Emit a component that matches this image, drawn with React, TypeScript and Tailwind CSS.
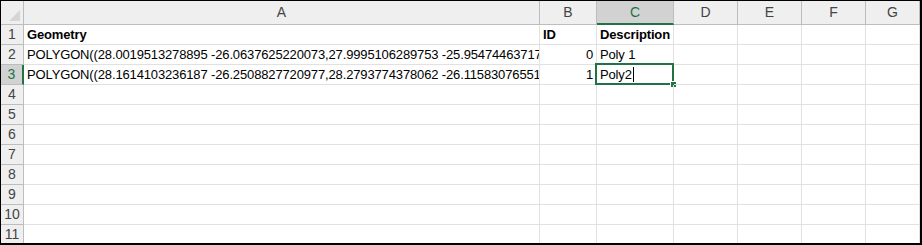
import React from "react";

const cols = ["A", "B", "C", "D", "E", "F", "G"];

type Cell = { text?: string; bold?: boolean; right?: boolean };

const rows: Cell[][] = [
  [{ text: "Geometry", bold: true }, { text: "ID", bold: true }, { text: "Description", bold: true }],
  [
    { text: "POLYGON((28.0019513278895 -26.0637625220073,27.9995106289753 -25.9547446371712,28.0921044783211 -25.9412387415526))" },
    { text: "0", right: true },
    { text: "Poly 1" },
  ],
  [
    { text: "POLYGON((28.1614103236187 -26.2508827720977,28.2793774378062 -26.1158307655131,28.3301948372015 -26.2011744308192))" },
    { text: "1", right: true },
    { text: "Poly2" },
  ],
];

const SelectedCol = 2;
const SelectedRow = 3;

const App = () => {
  return (
    <div className="w-[922px] h-[245px] overflow-hidden border-t border-l border-r-2 border-b-2 border-black bg-white font-['Liberation_Sans',Arial,sans-serif] text-[13px] tracking-[-0.14px] text-black">
      <div className="grid grid-cols-[23px_516px_57px_77px_64px_64px_64px_1fr] grid-rows-[24px_repeat(11,20px)]">
        {/* corner */}
        <div className="relative bg-[#efefef] border-r border-b border-[#bdbdbd]">
          <svg className="absolute right-[3px] bottom-[3px]" width="11" height="11" viewBox="0 0 11 11">
            <polygon points="11,0 11,11 0,11" fill="#d5d5d5" />
          </svg>
        </div>
        {cols.map((c, i) =>
          i === SelectedCol ? (
            <div
              key={c}
              className="flex items-center justify-center bg-[#d2d2d2] border-r border-[#bdbdbd] border-b-2 border-b-[#217346] text-[#217346] text-[14px] tracking-normal"
            >
              {c}
            </div>
          ) : (
            <div
              key={c}
              className="flex items-center justify-center bg-[#efefef] border-r border-b border-[#bdbdbd] text-[#444] text-[14px] tracking-normal"
            >
              {c}
            </div>
          )
        )}

        {Array.from({ length: 11 }).map((_, r) => {
          const n = r + 1;
          const data = rows[r] || [];
          return (
            <React.Fragment key={n}>
              {n === SelectedRow ? (
                <div className="flex items-center justify-center bg-[#d2d2d2] border-b border-[#bdbdbd] border-r-2 border-r-[#217346] text-[#217346] text-[14px] tracking-normal">
                  {n}
                </div>
              ) : (
                <div className="flex items-center justify-center bg-[#efefef] border-r border-b border-[#bdbdbd] text-[#444] text-[14px] tracking-normal">
                  {n}
                </div>
              )}
              {cols.map((c, ci) => {
                const cell = data[ci];
                const selected = n === SelectedRow && ci === SelectedCol;
                return (
                  <div
                    key={c}
                    className={
                      "relative flex items-center whitespace-nowrap border-r border-b border-[#e1e1e1] px-[3px] leading-[19px] " +
                      (cell?.right ? "justify-end " : "") +
                      (cell?.bold ? "font-bold " : "") +
                      (ci === 0 ? "overflow-hidden" : "")
                    }
                  >
                    {cell?.text}
                    {selected && (
                      <>
                        <span className="inline-block w-px h-[15px] bg-black ml-[1px]" />
                        <div className="absolute -top-[2px] -left-[2px] -right-[1px] -bottom-[1px] border-2 border-[#217346]" />
                        <div className="absolute -right-[4px] -bottom-[4px] w-[7px] h-[7px] bg-[#217346] border border-white" />
                      </>
                    )}
                  </div>
                );
              })}
            </React.Fragment>
          );
        })}
      </div>
    </div>
  );
};

export default App;
